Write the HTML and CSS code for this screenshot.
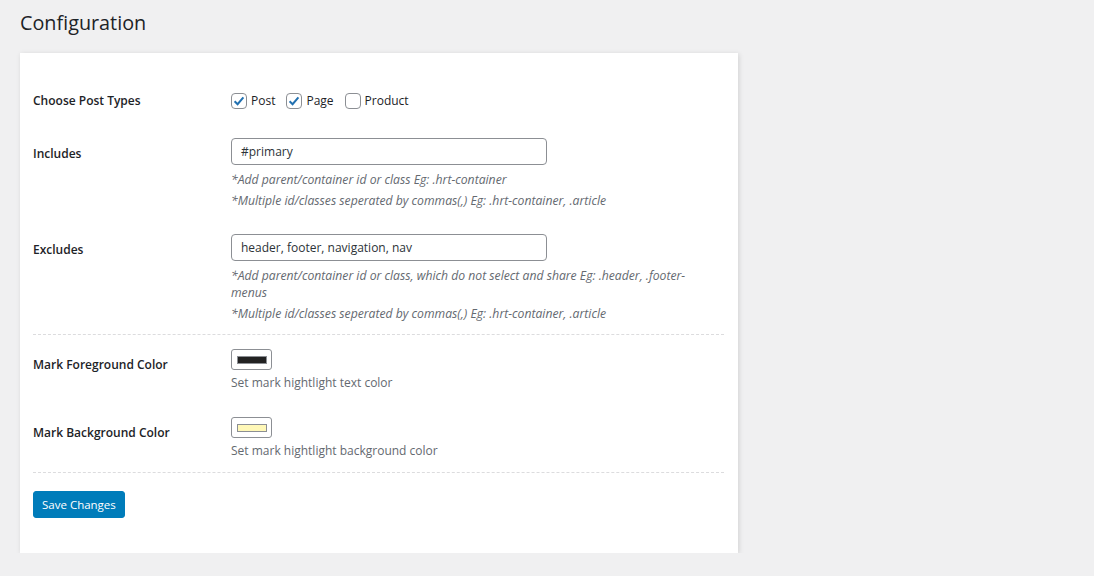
FILE: index.html
```html
<!DOCTYPE html>
<html>
<head>
<meta charset="utf-8">
<link rel="stylesheet" href="styles.css">
</head>
<body>
<div class="wrap">
  <h1 class="title">Configuration</h1>
  <div class="card">
    <div class="row row-types">
      <div class="label">Choose Post Types</div>
      <div class="field checks">
        <label class="check"><span class="box on"><svg viewBox="0 0 16 16" width="16" height="16"><path d="M3.6 8.2 L6.6 11.2 L12.4 4.4" fill="none" stroke="#2271b1" stroke-width="2"/></svg></span>Post</label>
        <label class="check"><span class="box on"><svg viewBox="0 0 16 16" width="16" height="16"><path d="M3.6 8.2 L6.6 11.2 L12.4 4.4" fill="none" stroke="#2271b1" stroke-width="2"/></svg></span>Page</label>
        <label class="check"><span class="box"></span>Product</label>
      </div>
    </div>
    <div class="row row-inc">
      <div class="label lbl-input">Includes</div>
      <div class="field">
        <div class="input">#primary</div>
        <p class="desc">*Add parent/container id or class Eg: .hrt-container</p>
        <p class="desc">*Multiple id/classes seperated by commas(,) Eg: .hrt-container, .article</p>
      </div>
    </div>
    <div class="row row-exc">
      <div class="label lbl-input">Excludes</div>
      <div class="field">
        <div class="input">header, footer, navigation, nav</div>
        <p class="desc narrow">*Add parent/container id or class, which do not select and share Eg: .header, .footer-menus</p>
        <p class="desc">*Multiple id/classes seperated by commas(,) Eg: .hrt-container, .article</p>
      </div>
    </div>
    <div class="divider"></div>
    <div class="row row-color">
      <div class="label lbl-color">Mark Foreground Color</div>
      <div class="field">
        <div class="swatch"><span class="chip chip-dark"></span></div>
        <p class="help">Set mark hightlight text color</p>
      </div>
    </div>
    <div class="row row-color second">
      <div class="label lbl-color">Mark Background Color</div>
      <div class="field">
        <div class="swatch"><span class="chip chip-light"></span></div>
        <p class="help">Set mark hightlight background color</p>
      </div>
    </div>
    <div class="divider divider-bottom"></div>
    <div class="actions">
      <button class="btn">Save Changes</button>
    </div>
  </div>
</div>
</body>
</html>
```
FILE: styles.css
```css
* { box-sizing: border-box; }
html, body { margin: 0; padding: 0; }
body {
  background: #f0f0f1;
  font-family: "Open Sans", "Noto Sans", sans-serif;
  color: #1d2327;
  font-size: 12px;
}
.wrap { padding: 8px 0 0 20px; }
.title {
  margin: 0 0 15px 0;
  font-size: 19.8px;
  font-weight: 400;
  line-height: 30px;
  color: #1d2327;
}
.card {
  width: 718px;
  height: 500px;
  background: #fff;
  box-shadow: 1px 1px 5px rgba(0,0,0,0.13);
  padding: 36px 14px 0 13px;
}
.row { display: flex; }
.label {
  width: 198px;
  flex: none;
  font-weight: 600;
  font-size: 12px;
  line-height: 20px;
}
.field { flex: 1; }
.row-types { height: 44px; align-items: flex-start; padding-top: 2px; }
.checks { display: flex; gap: 11px; align-items: center; }
.check { display: flex; align-items: center; gap: 3px; font-size: 12px; line-height: 20px; }
.box {
  width: 16px; height: 16px;
  border: 1px solid #8c8f94;
  border-radius: 4px;
  display: inline-flex; align-items: center; justify-content: center;
  margin-right: 1px;
}
.box svg { display: block; margin: -1px; }
.row-inc { margin-top: 5px; }
.lbl-input { padding-top: 6px; }
.input {
  width: 316px; height: 27px;
  border: 1px solid #8c8f94;
  border-radius: 4px;
  padding: 0 9px;
  line-height: 25px;
  font-size: 12px;
  color: #2c3338;
}
.desc {
  margin: 6px 0 0 0;
  font-style: italic;
  color: #646970;
  font-size: 12.2px;
  line-height: 17px;
}
.desc + .desc { margin-top: 4px; }
.desc.narrow { width: 480px; }
.row-exc { margin-top: 25px; }
.divider {
  border-top: 1px dashed #dcdcde;
  margin-top: 12px;
}
.row-color { margin-top: 14px; }
.row-color.second { margin-top: 24px; }
.lbl-color { padding-top: 6px; }
.swatch {
  width: 41px; height: 21px;
  border: 1px solid #8c8f94;
  border-radius: 3px;
  display: flex; align-items: center; justify-content: center;
}
.chip { width: 30px; height: 8px; border: 1px solid #8c8f94; display: block; }
.chip-dark { background: #222; }
.chip-light { background: #fff8b8; }
.help { margin: 3px 0 0 0; color: #646970; font-size: 12px; line-height: 20px; }
.divider-bottom { margin-top: 11px; }
.actions { margin-top: 18px; }
.btn {
  background: #007cba;
  color: #fff;
  border: 1px solid #007cba;
  border-radius: 3px;
  height: 27px;
  padding: 0 8px;
  font-family: "Open Sans", "Noto Sans", sans-serif;
  font-size: 11.5px;
  line-height: 25px;
}
```
